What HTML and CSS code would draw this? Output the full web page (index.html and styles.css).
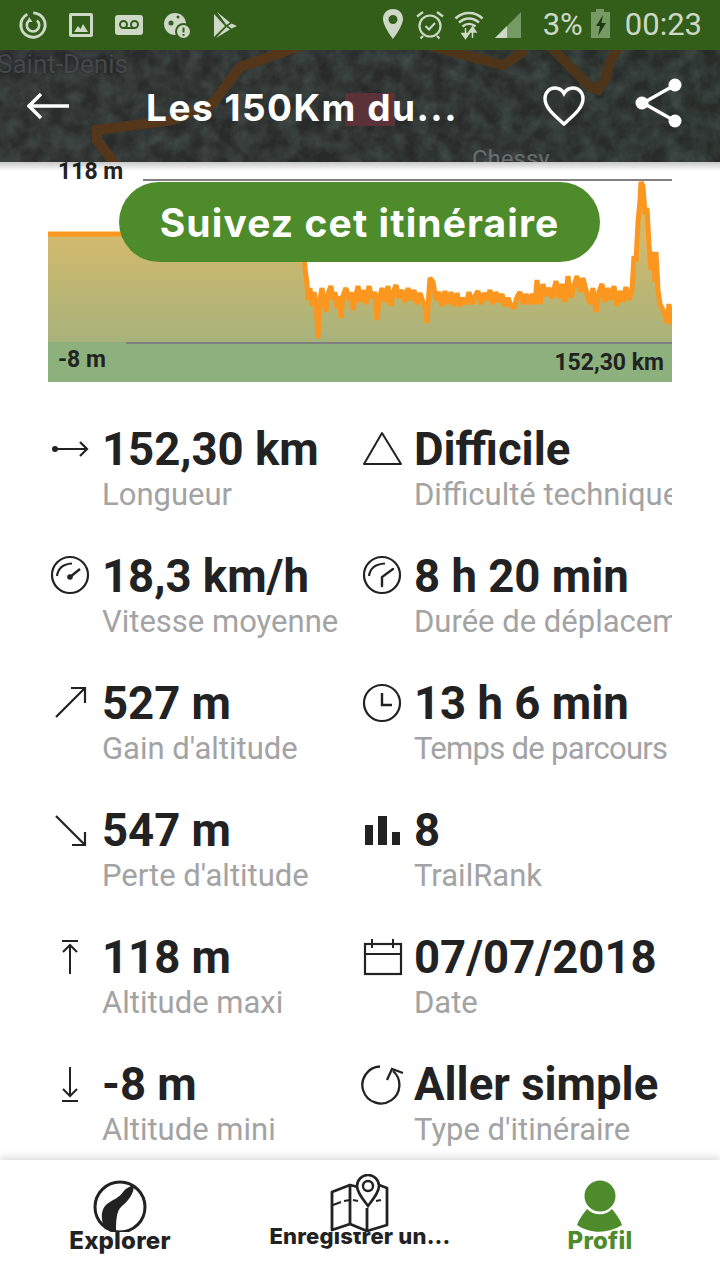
FILE: index.html
```html
<!DOCTYPE html>
<html lang="fr">
<head>
  <meta charset="UTF-8" />
  <meta name="viewport" content="width=device-width, initial-scale=1.0"/>
  <title>Les 150Km du...</title>
  <link rel="stylesheet" href="styles.css">
</head>
<body>
<div class="app">

  <div class="status-bar">
    <div class="status-left">
      <svg class="status-icon" viewBox="0 0 36 36">
        <circle cx="18" cy="18" r="12.200" fill="none" stroke="#cdd9c6" stroke-width="2.800" stroke-dasharray="64 6" transform="rotate(-60 18 18)"/>
        <path d="M14 13.500a6.200 6.200 0 1 0 8 0" fill="none" stroke="#cdd9c6" stroke-width="2.600"/>
        <path d="M14 10l3.500 5h-5z" fill="#cdd9c6"/>
      </svg>
      <svg class="status-icon" viewBox="0 0 36 36">
        <rect x="6" y="6" width="24" height="24" rx="2" fill="#cdd9c6"/>
        <rect x="9" y="9" width="18" height="18" fill="#335e1a"/>
        <path d="M11 25l4-6 2.500 3 2.500-5 5 8z" fill="#cdd9c6"/>
      </svg>
      <svg class="status-icon" viewBox="0 0 36 36">
        <rect x="4" y="8" width="28" height="20" rx="3" fill="#cdd9c6"/>
        <circle cx="12.500" cy="17.500" r="3.500" fill="none" stroke="#335e1a" stroke-width="2"/>
        <circle cx="23.500" cy="17.500" r="3.500" fill="none" stroke="#335e1a" stroke-width="2"/>
        <path d="M12.500 21h11" stroke="#335e1a" stroke-width="2"/>
      </svg>
      <svg class="status-icon" viewBox="0 0 36 36">
        <circle cx="16" cy="17" r="11" fill="#cdd9c6"/>
        <circle cx="12" cy="16" r="2.500" fill="#335e1a"/>
        <circle cx="19" cy="10" r="1.500" fill="#335e1a"/>
        <circle cx="24.500" cy="24.500" r="8.500" fill="#335e1a"/>
        <circle cx="24.500" cy="24.500" r="6.500" fill="#cdd9c6"/>
        <path d="M24.500 20.500v5M24.500 27v1.800" stroke="#335e1a" stroke-width="2"/>
      </svg>
      <svg class="status-icon" viewBox="0 0 36 36">
        <path d="M7 7v23l11-11z" fill="#cdd9c6"/>
        <path d="M10 5l13 10.500-3.500 2.500zM24.500 16.500L30 19l-5.500 2.500L21 19zM19.500 20l3.500 2.500L9 31z" fill="#cdd9c6"/>
      </svg>
    </div>
    <div class="status-right">
      <svg class="status-icon pin-icon" viewBox="0 0 24 36">
        <path fill-rule="evenodd" d="M12 2C5.800 2 2 6.800 2 12c0 7 10 20 10 20s10-13 10-20C22 6.800 18.200 2 12 2zm0 6a4.500 4.500 0 1 1 0 9 4.500 4.500 0 0 1 0-9z" fill="#cdd9c6"/>
      </svg>
      <svg class="status-icon alarm-icon" viewBox="0 0 30 36">
        <circle cx="15" cy="19" r="10.500" fill="none" stroke="#cdd9c6" stroke-width="2.200"/>
        <path d="M10.500 19l3.500 3.500 6-6.500" fill="none" stroke="#cdd9c6" stroke-width="2"/>
        <path d="M2 9.500l6-4.500M28 9.500L22 5M8 29l-2.500 2.500M22 29l2.500 2.500" stroke="#cdd9c6" stroke-width="2.200"/>
      </svg>
      <svg class="status-icon wifi-icon" viewBox="0 0 30 36">
        <path d="M1.500 11.500C9 4 21 4 28.500 11.500M5 15.500c6-5.500 14-5.500 20 0M8.500 19.500c4-3.500 9-3.500 13 0" fill="none" stroke="#cdd9c6" stroke-width="2.500"/>
        <path d="M11.500 21v7M8 26.500l3.500 5 3.500-5zM18.500 31v-9M15 25l3.500-5 3.500 5z" fill="#cdd9c6" stroke="#cdd9c6" stroke-width="1.500"/>
      </svg>
      <svg class="status-icon signal-icon" viewBox="0 0 28 36">
        <path d="M1 31L27 5v26z" fill="#769a63"/>
        <path d="M1 31l12-12v12z" fill="#cdd9c6"/>
      </svg>
      <span class="status-text percent">3%</span>
      <svg class="status-icon battery-icon" viewBox="0 0 20 36">
        <rect x="6" y="2" width="8" height="3" fill="#769a63"/>
        <rect x="1" y="5" width="19" height="26" fill="#769a63"/>
        <path d="M13 8L6 19h4l-2 10 8-13h-4.500z" fill="#1f3a12"/>
      </svg>
      <span class="status-text">00:23</span>
    </div>
  </div>

  <header class="top-bar">
    <svg class="map-bg" viewBox="0 50 720 112" preserveAspectRatio="none">
      <defs>
        <filter id="grain" x="0" y="0" width="100%" height="100%">
          <feTurbulence type="fractalNoise" baseFrequency="0.06" numOctaves="4" seed="5"/>
          <feColorMatrix values="0 0 0 0 0.07  0 0 0 0 0.10  0 0 0 0 0.09  1.100 0 0 0 -0.300"/>
        </filter>
        <linearGradient id="mapside" x1="0" x2="1" y1="0" y2="0">
          <stop offset="0" stop-color="#2b2d2d"/>
          <stop offset="0.45" stop-color="#282a29"/>
          <stop offset="1" stop-color="#272c29"/>
        </linearGradient>
      </defs>
      <rect x="0" y="50" width="720" height="112" fill="url(#mapside)"/>
      <rect x="0" y="50" width="720" height="112" filter="url(#grain)"/>
      <path d="M300 46L240 67 213 103 173 120 120 127 97 130 97 140 116 166" fill="none" stroke="#54371a" stroke-width="10"/>
      <path d="M430 46L503 65 526 50M550 46L590 87 598 90 606 78 608 68 618 46" fill="none" stroke="#4e3519" stroke-width="10"/>
      <rect x="345" y="93" width="50" height="33" fill="#5b3238"/>
    </svg>
    <span class="map-label saint-denis">Saint-Denis</span>
    <span class="map-label chessy">Chessy</span>
    <svg class="back-icon" viewBox="0 0 44 30">
      <path d="M42 15H3M14 3L2 15l12 12" fill="none" stroke="#fff" stroke-width="3.400"/>
    </svg>
    <h1 class="title">Les 150Km du...</h1>
    <svg class="heart-icon" viewBox="0 0 44 44">
      <path d="M22 40C12 31 3 24 3 14.500 3 8 8 4 13 4c4 0 7 2 9 5.500C24 6 27 4 31 4c5 0 10 4 10 10.500C41 24 32 31 22 40z" fill="none" stroke="#fff" stroke-width="3.400"/>
    </svg>
    <svg class="share-icon" viewBox="0 0 48 52">
      <path d="M40 8L8 26l32 18" fill="none" stroke="#fff" stroke-width="3.400"/>
      <circle cx="40" cy="8" r="6.500" fill="#fff"/>
      <circle cx="7" cy="26" r="6.500" fill="#fff"/>
      <circle cx="40" cy="44" r="6.500" fill="#fff"/>
    </svg>
  </header>

  <main class="content">
    <section class="chart">
      <svg class="chart-svg" viewBox="48 162 624 220">
        <defs>
          <linearGradient id="elev" gradientUnits="userSpaceOnUse" x1="0" x2="0" y1="234" y2="344">
            <stop offset="0" stop-color="#d3b96c"/>
            <stop offset="1" stop-color="#a6b37b"/>
          </linearGradient>
        </defs>
        <path fill="url(#elev)" stroke="#fb971f" stroke-width="5" stroke-linejoin="bevel" d="M40 234H303L305 268 307 284 308 300 310 288 312 306 314 292 316 302 318 338 320 300 322 288 324 302 326 312 328 294 331 286 333 300 335 292 337 308 339 296 341 318 343 296 346 288 349 300 351 292 353 310 356 295 358 286 361 302 363 290 366 304 369 286 372 298 375 292 377 320 379 300 382 288 385 302 388 286 391 306 393 293 396 285 399 298 402 290 405 302 408 288 411 300 414 290 417 304 420 293 423 302 426 310 427 323 429 292 430 278 433 282 436 300 439 292 442 306 445 291 448 304 451 292 454 306 457 293 460 306 463 298 466 304 469 292 472 304 475 296 478 291 481 304 484 293 487 300 490 290 493 304 496 292 499 302 502 294 505 306 508 298 511 306 514 308 517 297 520 292 523 304 526 294 529 304 532 294 535 304 537 280 540 304 543 284 546 296 549 288 552 298 556 281 559 298 562 284 565 302 568 276 571 298 574 286 577 276 580 292 583 278 586 290 590 304 593 288 596 312 599 292 602 284 605 302 608 288 611 300 614 286 617 306 620 291 623 302 626 287 629 300 632 290 634 256 636 262 638 222 640 200 641 182 643 186 645 214 647 208 649 245 651 270 653 252 655 282 656 252 658 290 660 304 663 310 667 323 669 304 671 323 680 323V352H40Z"/>
        <rect x="48" y="342" width="624" height="40" fill="#8db17d"/>
        <rect x="143" y="179" width="529" height="2" fill="#808080"/>
        <rect x="126" y="342" width="546" height="2" fill="#808080"/>
      </svg>
      <span class="chart-label max-label">118 m</span>
      <span class="chart-label min-label">-8 m</span>
      <span class="chart-label dist-label">152,30 km</span>
      <button class="follow-btn">Suivez cet itinéraire</button>
    </section>

    <section class="stats">
      <div class="stat">
        <svg class="stat-icon" viewBox="0 0 44 44"><circle cx="7" cy="21" r="3" fill="#222"/><path d="M7 21h32M32 14l7 7-7 7" fill="none" stroke="#222" stroke-width="2.200"/></svg>
        <div class="stat-text"><div class="stat-value">152,30 km</div><div class="stat-name">Longueur</div></div>
      </div>
      <div class="stat">
        <svg class="stat-icon" viewBox="0 0 44 44"><path d="M4 36L22 5 41 36z" fill="none" stroke="#222" stroke-width="2" stroke-linejoin="round"/></svg>
        <div class="stat-text"><div class="stat-value">Difficile</div><div class="stat-name">Difficulté technique</div></div>
      </div>
      <div class="stat">
        <svg class="stat-icon" viewBox="0 0 44 44"><circle cx="22" cy="20" r="18" fill="none" stroke="#222" stroke-width="2.200"/><path d="M9 21C10 13 16 9 24 8.500" fill="none" stroke="#222" stroke-width="2.200"/><circle cx="22" cy="22" r="2.800" fill="#222"/><path d="M22 22l10-8" stroke="#222" stroke-width="2.400"/></svg>
        <div class="stat-text"><div class="stat-value">18,3 km/h</div><div class="stat-name">Vitesse moyenne</div></div>
      </div>
      <div class="stat">
        <svg class="stat-icon" viewBox="0 0 44 44"><circle cx="22" cy="20" r="18" fill="none" stroke="#222" stroke-width="2.200"/><path d="M9 21C10 13 16 9 25 8.500" fill="none" stroke="#222" stroke-width="2.200"/><path d="M22 31V22L33 14" fill="none" stroke="#222" stroke-width="2.400" stroke-linecap="round"/></svg>
        <div class="stat-text"><div class="stat-value">8 h 20 min</div><div class="stat-name">Durée de déplacement</div></div>
      </div>
      <div class="stat">
        <svg class="stat-icon" viewBox="0 0 44 44"><path d="M8 35L37 6M23 6h14v15" fill="none" stroke="#222" stroke-width="2.200"/></svg>
        <div class="stat-text"><div class="stat-value">527 m</div><div class="stat-name">Gain d'altitude</div></div>
      </div>
      <div class="stat">
        <svg class="stat-icon" viewBox="0 0 44 44"><circle cx="22" cy="21" r="18" fill="none" stroke="#222" stroke-width="2.200"/><path d="M22 11v12h10" fill="none" stroke="#222" stroke-width="2.400"/></svg>
        <div class="stat-text"><div class="stat-value">13 h 6 min</div><div class="stat-name stat-name-tight">Temps de parcours total</div></div>
      </div>
      <div class="stat">
        <svg class="stat-icon" viewBox="0 0 44 44"><path d="M8 7L37 36M24 36h13V23" fill="none" stroke="#222" stroke-width="2.200"/></svg>
        <div class="stat-text"><div class="stat-value">547 m</div><div class="stat-name">Perte d'altitude</div></div>
      </div>
      <div class="stat">
        <svg class="stat-icon" viewBox="0 0 44 44"><rect x="5" y="16" width="8" height="20" fill="#222"/><rect x="18" y="7" width="9" height="29" fill="#222"/><rect x="32" y="23" width="8" height="13" fill="#222"/></svg>
        <div class="stat-text"><div class="stat-value">8</div><div class="stat-name">TrailRank</div></div>
      </div>
      <div class="stat">
        <svg class="stat-icon" viewBox="0 0 44 44"><path d="M14 5h16M22 38V9M15 16l7-7 7 7" fill="none" stroke="#222" stroke-width="2"/></svg>
        <div class="stat-text"><div class="stat-value">118 m</div><div class="stat-name">Altitude maxi</div></div>
      </div>
      <div class="stat">
        <svg class="stat-icon" viewBox="0 0 44 44"><rect x="5" y="8" width="36" height="30" fill="none" stroke="#222" stroke-width="2.200"/><path d="M5 18h36M12 3v9M33 3v9" fill="none" stroke="#222" stroke-width="2"/></svg>
        <div class="stat-text"><div class="stat-value">07/07/2018</div><div class="stat-name">Date</div></div>
      </div>
      <div class="stat">
        <svg class="stat-icon" viewBox="0 0 44 44"><path d="M22 4v29M15 26l7 7 7-7M14 38h16" fill="none" stroke="#222" stroke-width="2"/></svg>
        <div class="stat-text"><div class="stat-value">-8 m</div><div class="stat-name">Altitude mini</div></div>
      </div>
      <div class="stat">
        <svg class="stat-icon" viewBox="0 0 44 44"><path d="M20 3.500A18.500 18.500 0 1 0 33 8" fill="none" stroke="#222" stroke-width="2.300"/><path d="M27 17L32 6l11 4" fill="none" stroke="#222" stroke-width="2.300"/></svg>
        <div class="stat-text"><div class="stat-value">Aller simple</div><div class="stat-name">Type d'itinéraire</div></div>
      </div>
    </section>
  </main>

  <nav class="bottom-nav">
    <div class="nav-item">
      <svg class="nav-icon" viewBox="0 0 60 58">
        <circle cx="30" cy="33" r="25" fill="none" stroke="#222" stroke-width="3"/>
        <path d="M44 11C44 20 38 27 32 32 27 36 26 44 26 57L15 55C10 44 11 35 17 30 24 25 29 24 33 18 36 14 40 12 44 11z" fill="#222"/>
      </svg>
      <span class="nav-label">Explorer</span>
    </div>
    <div class="nav-item nav-item-map">
      <svg class="nav-icon" viewBox="0 0 60 58">
        <path d="M28 13l-8-2L2 18v38l18-6 17 7 20-6V14l-8-3" fill="none" stroke="#222" stroke-width="2.800" stroke-linejoin="round"/>
        <path d="M20 11v39M37 34v23" fill="none" stroke="#222" stroke-width="2.800"/>
        <path d="M3 31l8-3M14 27l6-1M23 26l5 1M46 27l5-1" fill="none" stroke="#222" stroke-width="2"/>
        <path d="M38 32C32 24 27 18 27 12a11 11 0 0 1 22 0c0 6-5 12-11 20z" fill="#fff" stroke="#222" stroke-width="2.600"/>
        <circle cx="38" cy="12" r="5" fill="none" stroke="#222" stroke-width="2.400"/>
      </svg>
      <span class="nav-label">Enregistrer un...</span>
    </div>
    <div class="nav-item nav-item-active">
      <svg class="nav-icon" viewBox="0 0 60 58">
        <circle cx="30" cy="22" r="15.500" fill="#4d8b2b"/>
        <path d="M17 35C24 42 36 42 42 35 46 40 50 45 52 51 38 60 20 60 7 51 9 45 13 40 17 35z" fill="#4d8b2b"/>
      </svg>
      <span class="nav-label">Profil</span>
    </div>
  </nav>

</div>
</body>
</html>
```

FILE: styles.css
```css
body {
  margin: 0;
  background: #fff;
  font-family: Roboto, sans-serif;
  color: #222;
}

.app {
  width: 720px;
  height: 1280px;
  display: flex;
  flex-direction: column;
  overflow: hidden;
}

/* status bar */
.status-bar {
  height: 50px;
  flex: none;
  display: flex;
  justify-content: space-between;
  align-items: center;
  background: #335e1a;
  padding: 0 18px 0 15px;
  position: relative;
  z-index: 3;
}

.status-left {
  display: flex;
  gap: 12px;
}

.status-right {
  display: flex;
  align-items: center;
}

.status-icon {
  width: 36px;
  height: 36px;
  display: block;
}

.pin-icon { width: 24px; margin-right: 10px; }
.alarm-icon { width: 30px; margin-right: 9px; }
.wifi-icon { width: 30px; margin-right: 10px; }
.signal-icon { width: 28px; margin-right: 21px; }
.battery-icon { width: 20px; margin: 0 15px 0 7px; }

.status-text {
  font-size: 31px;
  color: #cdd9c6;
  line-height: 50px;
}

/* map header */
.top-bar {
  height: 112px;
  flex: none;
  display: flex;
  align-items: center;
  position: relative;
  z-index: 2;
  overflow: hidden;
  background: #2a2c2b;
}

.map-bg {
  position: absolute;
  left: 0;
  top: 0;
  width: 720px;
  height: 112px;
}

.map-label {
  position: absolute;
  font-size: 26px;
  color: #45484b;
  line-height: 30px;
}

.saint-denis {
  left: -3px;
  top: -1px;
  text-shadow: 0 0 3px #1e1e1e;
}

.chessy {
  left: 472px;
  top: 94px;
  font-size: 24px;
  color: #6a6d70;
}

.back-icon {
  position: relative;
  width: 44px;
  height: 30px;
  margin-left: 27px;
  flex: none;
}

.title {
  position: relative;
  margin: 3px 0 0 75px;
  width: 350px;
  flex: none;
  font-family: Inter, sans-serif;
  font-size: 37px;
  font-weight: 700;
  letter-spacing: 1.5px;
  color: #fff;
  white-space: nowrap;
}

.heart-icon {
  position: absolute;
  left: 542px;
  top: 34px;
  width: 44px;
  height: 44px;
}

.share-icon {
  position: absolute;
  left: 635px;
  top: 27px;
  width: 48px;
  height: 52px;
}

/* chart + stats */
.content {
  flex: 1;
  min-height: 0;
  overflow: hidden;
  padding: 0 48px;
  position: relative;
}

.content::before {
  content: "";
  position: absolute;
  left: 0;
  right: 0;
  top: 0;
  height: 9px;
  z-index: 1;
  background: linear-gradient(rgba(0,0,0,0.22), rgba(0,0,0,0));
}

.chart {
  position: relative;
  height: 220px;
}

.chart-svg {
  display: block;
  width: 624px;
  height: 220px;
}

.chart-label {
  position: absolute;
  font-size: 23px;
  font-weight: 700;
  line-height: 24px;
  color: #222;
}

.max-label { left: 10px; top: -2px; }
.min-label { left: 10px; top: 186px; }
.dist-label { right: 8px; top: 189px; }

.follow-btn {
  position: absolute;
  left: 71px;
  top: 20px;
  width: 481px;
  height: 80px;
  border: 0;
  border-radius: 40px;
  background: #4d8b2b;
  color: #fff;
  font-family: Inter, sans-serif;
  font-size: 39px;
  font-weight: 700;
  letter-spacing: 1.1px;
  padding: 0;
}

.stats {
  display: grid;
  grid-template-columns: 312px 312px;
  row-gap: 37px;
  padding-top: 43px;
}

.stat {
  display: flex;
  min-width: 0;
  overflow: hidden;
}

.stat:nth-child(odd) {
  padding-right: 20px;
}

.stat-icon {
  width: 44px;
  height: 44px;
  flex: none;
  margin: 3px 11px 0 0;
}

.stat-text {
  min-width: 0;
  white-space: nowrap;
  overflow: hidden;
  margin-left: -1px;
}

.stat-value {
  font-size: 45.500px;
  font-weight: 700;
  line-height: 50px;
  color: #222;
}

.stat-name {
  font-size: 31px;
  line-height: 40px;
  color: #a3a3a3;
}

.stat-name-tight {
  letter-spacing: -0.7px;
}

/* bottom nav */
.bottom-nav {
  height: 120px;
  flex: none;
  display: flex;
  position: relative;
  background: #fff;
  box-shadow: 0 -3px 8px rgba(0,0,0,0.14);
}

.nav-item {
  flex: 1;
  display: flex;
  flex-direction: column;
  align-items: center;
  padding-top: 14px;
}

.nav-icon {
  width: 60px;
  height: 58px;
  flex: none;
}

.nav-label {
  font-family: Inter, sans-serif;
  font-size: 24px;
  font-weight: 800;
  line-height: 24px;
  letter-spacing: 0.2px;
  margin-top: -3px;
  color: #222;
  white-space: nowrap;
}

.nav-item-map .nav-label {
  margin-top: -8px;
  font-size: 22px;
  letter-spacing: 0.2px;
}

.nav-item-map .nav-icon {
  position: relative;
  z-index: 1;
  background: #fff;
}

.nav-item-active .nav-label {
  color: #4d8b2b;
}
```
